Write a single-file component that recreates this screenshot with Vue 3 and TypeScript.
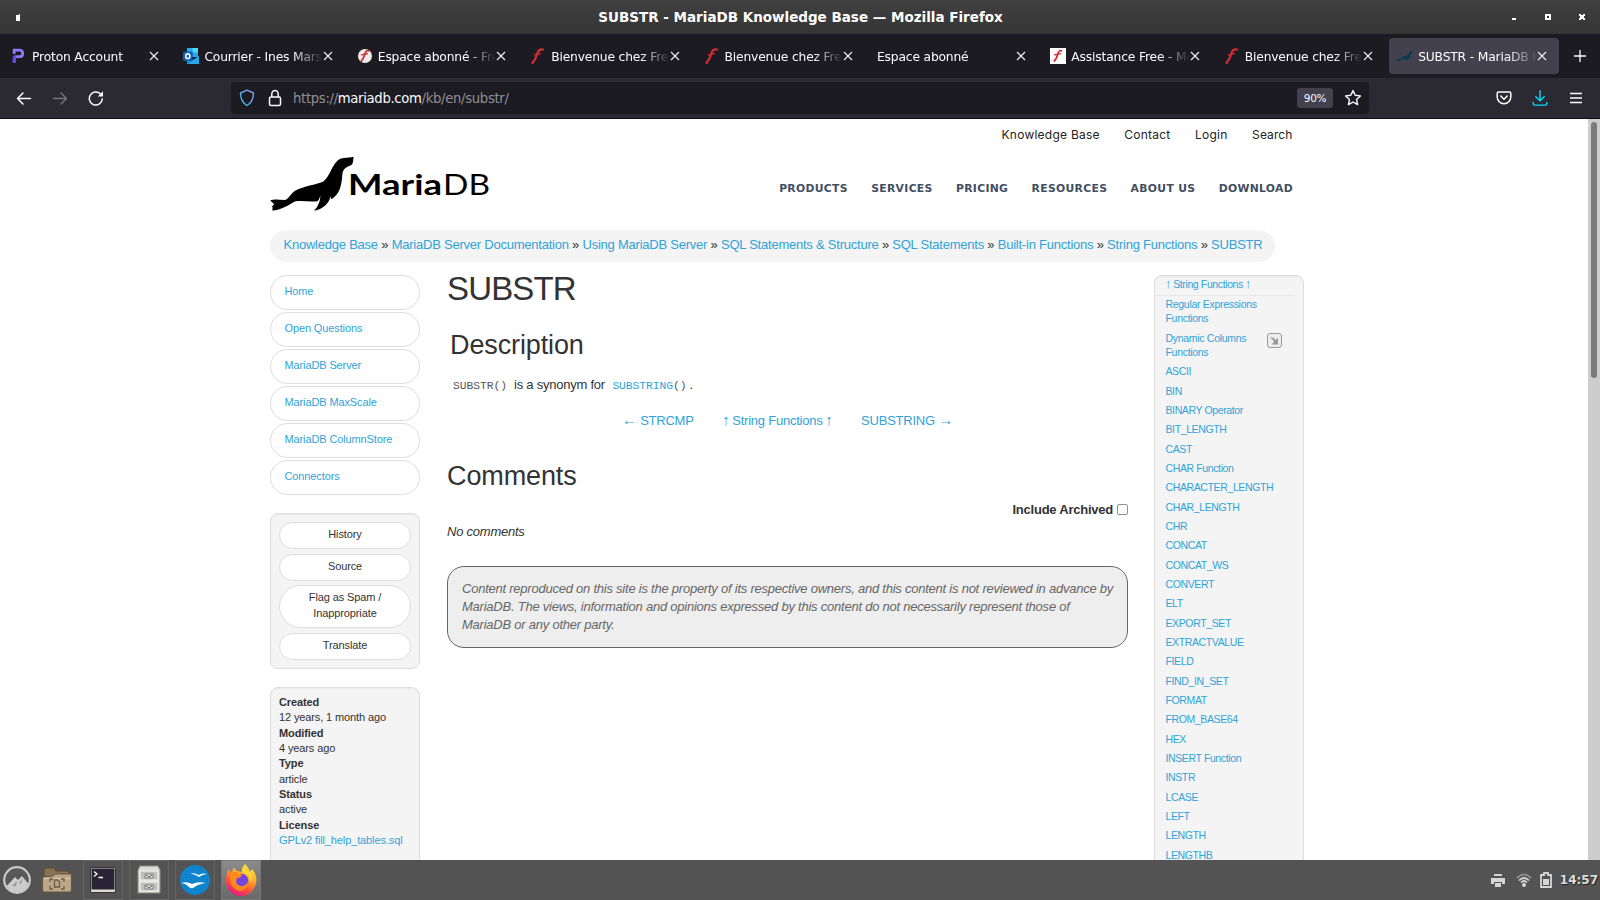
<script setup lang="ts">
interface Tab { title: string; icon: string; active?: boolean }
const tabs: Tab[] = [
  { title: 'Proton Account', icon: 'proton' },
  { title: 'Courrier - Ines Mars', icon: 'outlook' },
  { title: 'Espace abonné - Free', icon: 'free-round' },
  { title: 'Bienvenue chez Free', icon: 'free' },
  { title: 'Bienvenue chez Free', icon: 'free' },
  { title: 'Espace abonné', icon: '' },
  { title: 'Assistance Free - Mo', icon: 'free-square' },
  { title: 'Bienvenue chez Free', icon: 'free' },
  { title: 'SUBSTR - MariaDB K', icon: 'seal', active: true },
]
const topLinks: string[] = ['Knowledge Base', 'Contact', 'Login', 'Search']
const mainLinks: string[] = ['PRODUCTS', 'SERVICES', 'PRICING', 'RESOURCES', 'ABOUT US', 'DOWNLOAD']
const crumbs: string[] = ['Knowledge Base', 'MariaDB Server Documentation', 'Using MariaDB Server', 'SQL Statements & Structure', 'SQL Statements', 'Built-in Functions', 'String Functions', 'SUBSTR']
const menu: string[] = ['Home', 'Open Questions', 'MariaDB Server', 'MariaDB MaxScale', 'MariaDB ColumnStore', 'Connectors']
const meta: [string, string][] = [['Created', '12 years, 1 month ago'], ['Modified', '4 years ago'], ['Type', 'article'], ['Status', 'active']]
const functions: string[] = ['ASCII', 'BIN', 'BINARY Operator', 'BIT_LENGTH', 'CAST', 'CHAR Function', 'CHARACTER_LENGTH', 'CHAR_LENGTH', 'CHR', 'CONCAT', 'CONCAT_WS', 'CONVERT', 'ELT', 'EXPORT_SET', 'EXTRACTVALUE', 'FIELD', 'FIND_IN_SET', 'FORMAT', 'FROM_BASE64', 'HEX', 'INSERT Function', 'INSTR', 'LCASE', 'LEFT', 'LENGTH', 'LENGTHB']
const sealPath = 'M281 127C262 132 243 127 231 140C215 154 210 185 190 201C165 212 135 213 105 229C95 236 88 250 78 256C62 257 44 252 31 258C33 262 42 266 42 270L36 276C40 280 36 285 37 288C62 287 85 273 104 261C125 257 150 263 172 260C178 256 179 248 181 243C181 262 172 280 162 288C180 287 202 272 209 254L211 245C214 250 211 254 214 254C238 240 245 215 247 180C249 160 262 158 276 150C280 144 279 140 281 127Z'
</script>

<template>
  <div class="screen">
    <header class="titlebar">
      <svg class="win-menu" width="4" height="7"><path d="M0 1h3V0h1v7H0z" fill="#fff" /></svg>
      <span class="title">SUBSTR - MariaDB Knowledge Base — Mozilla Firefox</span>
      <svg class="win-buttons" width="76" height="8" viewBox="0 0 76 8" shape-rendering="crispEdges">
        <path d="M2 5h4v2H2z" fill="#fff" />
        <path d="M35 1h6v6h-6zM37 3v2h2V3z" fill="#fff" fill-rule="evenodd" />
        <path d="M69 1h2v1h2V1h2v2h-1v2h1v2h-2V6h-2v1h-2V5h1V3h-1z" fill="#fff" />
      </svg>
    </header>

    <div class="tabstrip">
      <div v-for="(t, i) in tabs" :key="i" class="tab" :class="{ active: t.active, plain: !t.icon }">
        <svg v-if="t.icon" class="favicon" width="16" height="16" viewBox="0 0 16 16">
          <g v-if="t.icon === 'proton'">
            <path d="M3.2 15V10.6Q3.2 8.7 5.2 8.7H8.4Q11.7 8.7 11.7 5.4T8.4 2.2H3.2V6" fill="none" stroke="#8f78ff" stroke-width="2.800" />
            <path d="M1.8 15v-4Q1.8 7.4 5 7.4L4.6 11v4z" fill="#6546ee" />
          </g>
          <g v-else-if="t.icon === 'outlook'">
            <path d="M4 0h11v9H4z" fill="#28a8ea" /><path d="M9.500 0H15v4.500H9.500z" fill="#50d9ff" /><path d="M4 4.500h5.500V9H4z" fill="#0364b8" />
            <path d="M4 8l6 4 6-4v8H4z" fill="#1590df" /><path d="M5 16l11-8v8z" fill="#28a8ea" />
            <rect y="3.500" width="9.500" height="9.500" rx="1" fill="#0a5fb4" /><ellipse cx="4.800" cy="8.200" rx="2.100" ry="2.400" fill="none" stroke="#fff" stroke-width="1.500" />
          </g>
          <g v-else-if="t.icon === 'seal'">
            <svg width="16" height="12" y="2" viewBox="30 125 252 164"><path :d="sealPath" fill="#0a3a52" /></svg>
          </g>
          <g v-else>
            <circle v-if="t.icon === 'free-round'" cx="8" cy="8" r="7" fill="#ececec" />
            <rect v-if="t.icon === 'free-square'" width="16" height="16" fill="#fff" />
            <path v-if="t.icon === 'free'" d="M13 1.500Q9 .500 7.500 5Q6 11 2.500 15" fill="none" stroke="#cf2e35" stroke-width="2.300" stroke-linecap="round" />
            <path v-else d="M11.500 2.800Q9 2 8 5.500Q6.500 11 4.300 13" fill="none" stroke="#d42a30" stroke-width="1.700" stroke-linecap="round" />
            <path d="M4.500 6.900L10.500 5.600" fill="none" stroke="#d42a30" stroke-width="1.200" stroke-linecap="round" />
          </g>
        </svg>
        <span class="tab-title">{{ t.title }}</span>
        <svg class="close" width="10" height="10"><path d="M1 1l8 8M9 1l-8 8" stroke="#f0f0f4" stroke-width="1.100" /></svg>
      </div>
      <svg class="newtab" width="12" height="12"><path d="M6 0v12M0 6h12" stroke="#fbfbfe" stroke-width="1.300" /></svg>
    </div>

    <div class="toolbar">
      <div class="nav-icons">
        <svg width="16" height="16" fill="none" stroke="#fbfbfe" stroke-width="1.500" stroke-linecap="round" stroke-linejoin="round"><path d="M14.500 8.500H1.500M7 3L1.500 8.500 7 14" /></svg>
        <svg width="16" height="16" fill="none" stroke="#77767e" stroke-width="1.300" stroke-linecap="round" stroke-linejoin="round"><path d="M1.500 8.500h13M9 3l5.500 5.500L9 14" /></svg>
        <svg width="16" height="17" fill="none" stroke="#fbfbfe" stroke-width="1.500" stroke-linecap="round"><path d="M14.300 9A6.500 6.500 0 1 1 12.500 4" /><path d="M15 1.300V6.500H9.800z" fill="#fbfbfe" stroke="none" /></svg>
      </div>
      <div class="urlbar">
        <svg width="16" height="18" viewBox="0 0 16 18" fill="none" stroke-width="1.400">
          <defs><linearGradient id="shield" x1="1" y1="0" x2="0" y2="1"><stop offset="0" stop-color="#a48bf5" /><stop offset="1" stop-color="#20c8f0" /></linearGradient></defs>
          <path d="M8 1.200L14.500 4C14.500 9.500 13 13.500 8 16.500C3 13.500 1.500 9.500 1.500 4Z" stroke="url(#shield)" stroke-linejoin="round" />
        </svg>
        <svg class="lock" width="14" height="18" fill="none" stroke="#fbfbfe" stroke-width="1.500"><rect x="1.500" y="8" width="11" height="8.500" rx="1.500" /><path d="M3.800 8V5a3.200 3.600 0 0 1 6.400 0V8" /></svg>
        <span class="url">https://<b>mariadb.com</b>/kb/en/substr/</span>
        <span class="zoom">90%</span>
        <svg class="star" width="18" height="18" viewBox="0 0 18 18" fill="none" stroke="#fbfbfe" stroke-width="1.400" stroke-linejoin="round"><path d="M9 1.500l2.200 4.800 5.200.6-3.900 3.500 1.100 5.200L9 13l-4.600 2.600 1.100-5.200L1.600 6.900l5.200-.6z" /></svg>
      </div>
      <div class="tools">
        <svg width="16" height="16" fill="none" stroke="#fbfbfe" stroke-width="1.500" stroke-linecap="round" stroke-linejoin="round"><path d="M2.500 2h11q1.300 0 1.300 1.300V7A6.800 6.800 0 0 1 1.200 7V3.300Q1.200 2 2.500 2zM4.800 6l3.200 3.200L11.200 6" /></svg>
        <svg width="16" height="16" fill="none" stroke="#00ddff" stroke-width="1.400" stroke-linecap="round" stroke-linejoin="round"><path d="M8 .7v10M3.800 6.700L8 10.800l4.200-4.100M1.200 12.500v1q0 1.600 1.600 1.600h10.400q1.600 0 1.600-1.600v-1" /></svg>
        <svg class="burger" width="14" height="16" stroke="#fbfbfe" stroke-width="1.300"><path d="M1 3.500h12M1 8h12M1 12.500h12" /></svg>
      </div>
    </div>

    <div class="viewport">
      <div class="page">
        <nav class="top-links"><a v-for="l in topLinks" :key="l">{{ l }}</a></nav>
        <div class="brand-row">
          <svg class="logo" width="222" height="56" viewBox="0 0 222 56">
            <svg width="84" height="55" viewBox="30 125 252 164"><path :d="sealPath" /></svg>
            <text x="78" y="39" class="logo-bold" textLength="94" lengthAdjust="spacingAndGlyphs">Maria</text>
            <text x="173" y="39" class="logo-light" textLength="47" lengthAdjust="spacingAndGlyphs">DB</text>
          </svg>
          <nav class="main-links"><a v-for="l in mainLinks" :key="l">{{ l }}</a></nav>
        </div>
        <div class="breadcrumb"><template v-for="(c, i) in crumbs" :key="c"><i v-if="i"> » </i><a>{{ c }}</a></template></div>

        <div class="columns">
          <aside class="left">
            <a v-for="m in menu" :key="m" class="menu-item">{{ m }}</a>
            <div class="box actions">
              <span class="action">History</span>
              <span class="action">Source</span>
              <span class="action tall">Flag as Spam / Inappropriate</span>
              <span class="action">Translate</span>
            </div>
            <dl class="box meta">
              <template v-for="m in meta" :key="m[0]"><dt>{{ m[0] }}</dt><dd>{{ m[1] }}</dd></template>
              <dt>License</dt><dd><a>GPLv2 fill_help_tables.sql</a></dd>
            </dl>
          </aside>

          <main class="article">
            <h1>SUBSTR</h1>
            <h2 class="desc">Description</h2>
            <p class="synonym"><code>SUBSTR()</code><span>is a synonym for</span><code><a>SUBSTRING</a>()</code><em>.</em></p>
            <div class="siblings">
              <a><b class="arrow">←</b> STRCMP</a>
              <a><b class="arrow up-arrow">↑</b> String Functions <b class="arrow up-arrow">↑</b></a>
              <a>SUBSTRING <b class="arrow">→</b></a>
            </div>
            <h2 class="comments">Comments</h2>
            <div class="archived"><span>Include Archived</span><span class="check"></span></div>
            <p class="none">No comments</p>
            <div class="disclaimer">
              <div>Content reproduced on this site is the property of its respective owners, and this content is not reviewed in advance by</div>
              <div>MariaDB. The views, information and opinions expressed by this content do not necessarily represent those of</div>
              <div>MariaDB or any other party.</div>
            </div>
          </main>

          <aside class="box right">
            <div class="up"><a><b class="arrow up-arrow">↑</b> String Functions <b class="arrow up-arrow">↑</b></a></div>
            <a class="fn two">Regular Expressions<br>Functions</a>
            <div class="dyn">
              <a class="fn two">Dynamic Columns<br>Functions</a>
              <span class="expand"><svg width="9" height="9"><path d="M0 1.500Q4 .500 5.500 4L8 2V8.500H1.500L4 6Q3 3 0 1.500z" fill="#999" /></svg></span>
            </div>
            <a v-for="f in functions" :key="f" class="fn">{{ f }}</a>
          </aside>
        </div>
      </div>
      <div class="scrollbar"><div class="thumb"></div></div>
    </div>

    <footer class="taskbar">
      <svg class="start" width="28" height="28" viewBox="0 0 28 28">
        <defs><clipPath id="disc"><circle cx="14" cy="14" r="12" /></clipPath></defs>
        <circle cx="14" cy="14" r="12.800" fill="#585858" stroke="#c9c9c9" stroke-width="2.200" />
        <path clip-path="url(#disc)" d="M0 24L12 11l3 3 4-4 10 12v6H0z" fill="#ccc" /><path d="M9 20l5-5-1 5M16 17l4-5-2 6" fill="#999" />
      </svg>
      <svg class="folder" width="30" height="26" viewBox="0 0 30 26">
        <path d="M2 3q0-2 2-2h8l2 3h11q2 0 2 2v4H2z" fill="#8a7152" stroke="#5c482e" />
        <path d="M.6 10L11 9l2-2h16.400v16q0 2-2 2H2.600q-2 0-2-2z" fill="#bba888" stroke="#69563c" />
        <path d="M2 11.500h26" stroke="#d8c8ab" />
        <path d="M8 15v-3h3M19 12h3v3M8 19v3h3M22 19v3h-3M12.500 13h3l2 2v5h-5z" fill="none" stroke="#705d44" stroke-width="1.300" />
      </svg>
      <div class="launcher">
        <svg width="26" height="26"><rect x=".5" y=".5" width="25" height="25" rx="1.500" fill="#ddddd5" stroke="#343434" /><path d="M1.500 1.500h23v21h-23z" fill="#282335" /><path d="M4 4.500l3 2.500L4 9.500M8.500 10.500H13" fill="none" stroke="#fff" stroke-width="1.300" /></svg>
      </div>
      <div class="launcher">
        <svg width="24" height="30"><path d="M3 1h18l2 4v23H1V5z" fill="#dcdcd6" stroke="#8b8b86" /><path d="M3 6h18v9H3zM3 17h18v9H3z" fill="#c1c1bc" stroke="#f5f5f1" /><path d="M8 9h8v4H8zM8 20h8v4H8z" fill="#eee" stroke="#777" /><path d="M9 10l3 2 3-2M9 21l3 2 3-2" fill="none" stroke="#555" /></svg>
      </div>
      <div class="launcher">
        <svg width="30" height="30"><circle cx="15" cy="15" r="15" fill="#0f83cb" /><path d="M10.500 8.500Q15 7.500 18.500 10Q22 7.500 27 9Q22 9.500 19 12Q16 9.500 10.500 8.500zM1 18Q7 16 12 19Q18 16 25.500 18Q18 19 13 23Q11 24 9 22Q6 18.500 1 18z" fill="#fff" /></svg>
      </div>
      <div class="launcher running">
        <svg width="32" height="32" viewBox="0 0 32 32">
          <defs><linearGradient id="fox" x1=".8" y1="0" x2=".3" y2="1"><stop offset="0" stop-color="#fff044" /><stop offset=".4" stop-color="#ffa52b" /><stop offset=".7" stop-color="#ff5038" /><stop offset="1" stop-color="#e31587" /></linearGradient></defs>
          <path d="M20 0C23 3 24 5 25 8L27 5C31 10 32 14 31 19C29 27 23 32 16 32C7 32 1 25 1 17C1 12 2 8 4 5L5 9L8 6L8 3L12 7L17 8C17 5 18 2 20 0Z" fill="url(#fox)" />
          <circle cx="16.500" cy="16.500" r="6.800" fill="#7444dc" />
          <path d="M5 8L11 8L17 11Q16 14 12 14Q9 19 15 22Q20 23 23 18Q23 26 15 27Q6 25 5 15z" fill="#ff8a1f" />
          <path d="M17 8Q25 10 25 18Q28 14 26 9L20 1Q16 4 17 8z" fill="#ffd638" />
        </svg>
      </div>
      <div class="tray">
        <svg class="printer" width="14" height="13" fill="#d6d6d6"><path d="M3 0h8v2H3zM0 4h14v6h-3V8H3v2H0zM4 9h6v4H4z" /></svg>
        <svg class="wifi" width="16" height="14" fill="none"><path d="M1 5Q8-2 15 5" stroke="#8c8c8c" stroke-width="2" /><path d="M3 7.500Q8 2.500 13 7.500M5 9.500Q8 6.500 11 9.500" stroke="#d6d6d6" stroke-width="1.700" /><circle cx="8" cy="12" r="2" fill="#d6d6d6" /></svg>
        <svg class="battery" width="12" height="16"><path d="M1 3h3V1h4v2h3v12H1z" fill="none" stroke="#d6d6d6" stroke-width="1.800" /><path d="M3 7h6v6H3z" fill="#d6d6d6" /></svg>
        <span class="clock">14:57</span>
      </div>
    </footer>
  </div>
</template>

<style>
body { margin: 0; overflow: hidden; }
</style>

<style scoped>
* { box-sizing: border-box; }
.screen { width: 1600px; height: 900px; display: flex; flex-direction: column; overflow: hidden; background: #fff; font-family: "DejaVu Sans", sans-serif; }
svg { flex: none; }
.titlebar { height: 34px; flex: none; display: flex; align-items: center; justify-content: space-between; padding: 0 14px 0 16px; background: linear-gradient(#404040, #353535); color: #fff; }
.title { font-weight: 700; font-size: 13.500px; line-height: 34px; margin-left: 71px; }
.tabstrip { height: 44px; flex: none; display: flex; align-items: center; padding: 0 0 0 2px; background: #1c1b22; }
.tab { width: 169.400px; margin-right: 4px; height: 36px; flex: none; display: flex; align-items: center; padding: 0 12px 0 8px; border-radius: 4px; color: #fbfbfe; }
.tab.active { background: #42414d; }
.tab:first-child .favicon { margin-left: 1px; margin-right: 5px; }
.favicon { margin-right: 5px; }
.tab-title { flex: 1; min-width: 0; overflow: hidden; white-space: nowrap; font-size: 12.300px; letter-spacing: -.17px; line-height: 20px; margin-top: 2px; mask-image: linear-gradient(to left, transparent, #000 30px); }
.close { margin-left: 0; }
.tab.plain { padding-left: 8px; }
.newtab { margin-left: 11px; }
.toolbar { height: 41px; flex: none; display: flex; align-items: flex-start; background: #2b2a33; border-bottom: 1px solid #0c0c0d; }
.nav-icons { width: 231px; display: flex; gap: 20px; padding: 12px 0 0 16px; }
.urlbar { width: 1138px; height: 32px; margin-top: 4px; display: flex; align-items: center; padding: 0 7px 0 8px; background: #1c1b22; border-radius: 4px; }
.lock { margin-left: 13px; margin-top: -1px; }
.url { flex: 1; margin-left: 11px; font-size: 13.200px; letter-spacing: -.31px; color: #8f8f97; padding-top: 1px; }
.url b { font-weight: 400; color: #fbfbfe; }
.zoom { width: 36px; height: 20px; border-radius: 3px; background: #42414d; color: #fbfbfe; font-size: 10.500px; letter-spacing: -.3px; line-height: 20px; text-align: center; }
.star { margin-left: 11px; }
.tools { display: flex; gap: 20px; padding: 12px 0 0 127px; }
.burger { margin-left: 1px; }

.viewport { height: 741px; flex: none; display: flex; overflow: hidden; background: #fff; }
.page { width: 1588px; padding: 0 284px 0 270px; font-family: "Liberation Sans", Arial, sans-serif; color: #333; font-size: 13px; letter-spacing: -.235px; overflow: hidden; }
.scrollbar { width: 12px; background: #cdcdcd; padding: 3px 3px 0; }
.thumb { width: 6px; height: 256px; border-radius: 3px; background: #7b7b7b; }
a { color: #2fa3da; }
.top-links { height: 32px; display: flex; justify-content: flex-end; gap: 24.500px; padding: 0 11.500px 0 0; font: 12px/32px Inter, sans-serif; letter-spacing: .24px; }
.top-links a { color: #222; }
.top-links a:last-child { letter-spacing: .1px; }
.brand-row { height: 79px; display: flex; justify-content: space-between; padding: 5px 11px 0 0; letter-spacing: 0; }
.logo-bold { font: 700 28px Lato, sans-serif; }
.logo-light { font: 400 28px Lato, sans-serif; }
.main-links { display: flex; gap: 23.300px; font: 700 10.800px/66px "DejaVu Sans", sans-serif; letter-spacing: .32px; }
.main-links a { color: #424f62; }
.breadcrumb { width: 1005px; height: 32px; border-radius: 16px; background: #f4f4f4; padding: 0 13.500px; line-height: 30px; white-space: pre; letter-spacing: -.23px; }
.breadcrumb i { font-style: normal; }
.columns { height: 598px; display: flex; margin-top: 13px; align-items: flex-start; }
.left { width: 150px; flex: none; font-size: 11px; letter-spacing: -.12px; }
.menu-item { display: block; height: 35px; margin-bottom: 2px; border: 1px solid #ddd; border-radius: 18px; padding-left: 13.500px; line-height: 31px; }
.box { border: 1px solid #ddd; border-radius: 8px; background: #f4f4f4; box-shadow: inset 0 1px 1px rgba(0, 0, 0, .05); }
.actions { margin-top: 18px; height: 156px; padding: 8px; display: flex; flex-direction: column; gap: 5px; }
.action { height: 27px; flex: none; border: 1px solid #ddd; border-radius: 22px; background: #fff; text-align: center; line-height: 23px; }
.action.tall { height: 43px; line-height: 16px; padding: 3px 25px; margin-top: -1px; }
.meta { margin: 18px 0 0; height: 220px; padding: 7px 8px; line-height: 15.350px; white-space: nowrap; }
dt { font-weight: 700; }
dd { margin: 0; }
.article { width: 681px; margin: 0 26px 0 27px; flex: none; }
h1, h2, p { margin: 0; font-weight: 400; }
h1 { font-size: 33px; letter-spacing: -.85px; line-height: 36px; margin-top: -4px; }
h2 { font-size: 27px; letter-spacing: -.12px; line-height: 30px; }
.desc { margin: 23px 0 0 3px; }
.synonym { display: flex; align-items: baseline; margin: 16px 0 0 6px; line-height: 18px; }
.synonym span { margin: 0 7.500px 0 7px; }
.synonym em { font-style: normal; margin-left: 3px; }
code { font: 11.340px "Liberation Mono", monospace; letter-spacing: -.05px; color: #555; }
.siblings { display: flex; justify-content: center; gap: 29px; margin-top: 18px; height: 18px; line-height: 18px; white-space: nowrap; }
.arrow { display: inline-block; font-weight: 400; font-size: 15px; line-height: 0; }
.up-arrow { margin: 0 -.5px; }
.comments { margin-top: 31px; }
.archived { display: flex; align-items: center; justify-content: flex-end; gap: 4px; margin-top: 10px; line-height: 18px; font-weight: 700; }
.check { width: 11px; height: 11px; border: 1px solid #8f8f9d; border-radius: 2px; background: #fff; margin-top: -1px; }
.none { font-style: italic; margin-top: 4px; line-height: 18px; }
.disclaimer { height: 82px; margin-top: 25px; border: 1px solid #666; border-radius: 17px; background: #eee; padding: 13px 14px; line-height: 18px; font-style: italic; color: #666; white-space: nowrap; }
.right { width: 150px; height: 640px; flex: none; font-size: 10.500px; letter-spacing: -.38px; }
.right .arrow { font-size: 13px; }
.up { width: 140px; height: 20px; border-bottom: 1px solid #e8e8e8; padding-left: 10.500px; line-height: 17px; white-space: nowrap; }
.fn { display: block; padding-left: 10.500px; line-height: 14px; margin-bottom: 5.330px; }
.fn.two { margin-top: 1.400px; margin-bottom: 6px; letter-spacing: -.3px; }
.dyn { display: flex; justify-content: space-between; padding-right: 21px; }
.dyn .fn { margin-top: 0; margin-bottom: 5px; }
.expand { width: 15px; height: 15px; margin-top: 2px; border: 1px solid #999; border-radius: 3px; display: flex; align-items: center; justify-content: center; background: #eee; }

.taskbar { height: 40px; flex: none; display: flex; align-items: center; background: #535353; padding-left: 3px; }
.folder { margin: 0 11px; }
.launcher { width: 40px; height: 40px; margin-right: 6px; flex: none; display: flex; align-items: center; justify-content: center; border: 1px solid #646464; }
.launcher.running { background: linear-gradient(#8b8b8b, #696969); border-color: #777; }
.tray { margin-left: auto; display: flex; align-items: center; padding-right: 2px; color: #dcdcdc; }
.wifi { margin-left: 11px; }
.battery { margin: 0 8px 0 8px; }
.clock { font-weight: 700; font-size: 12px; text-shadow: 1px 1px 1px #222; }
</style>
